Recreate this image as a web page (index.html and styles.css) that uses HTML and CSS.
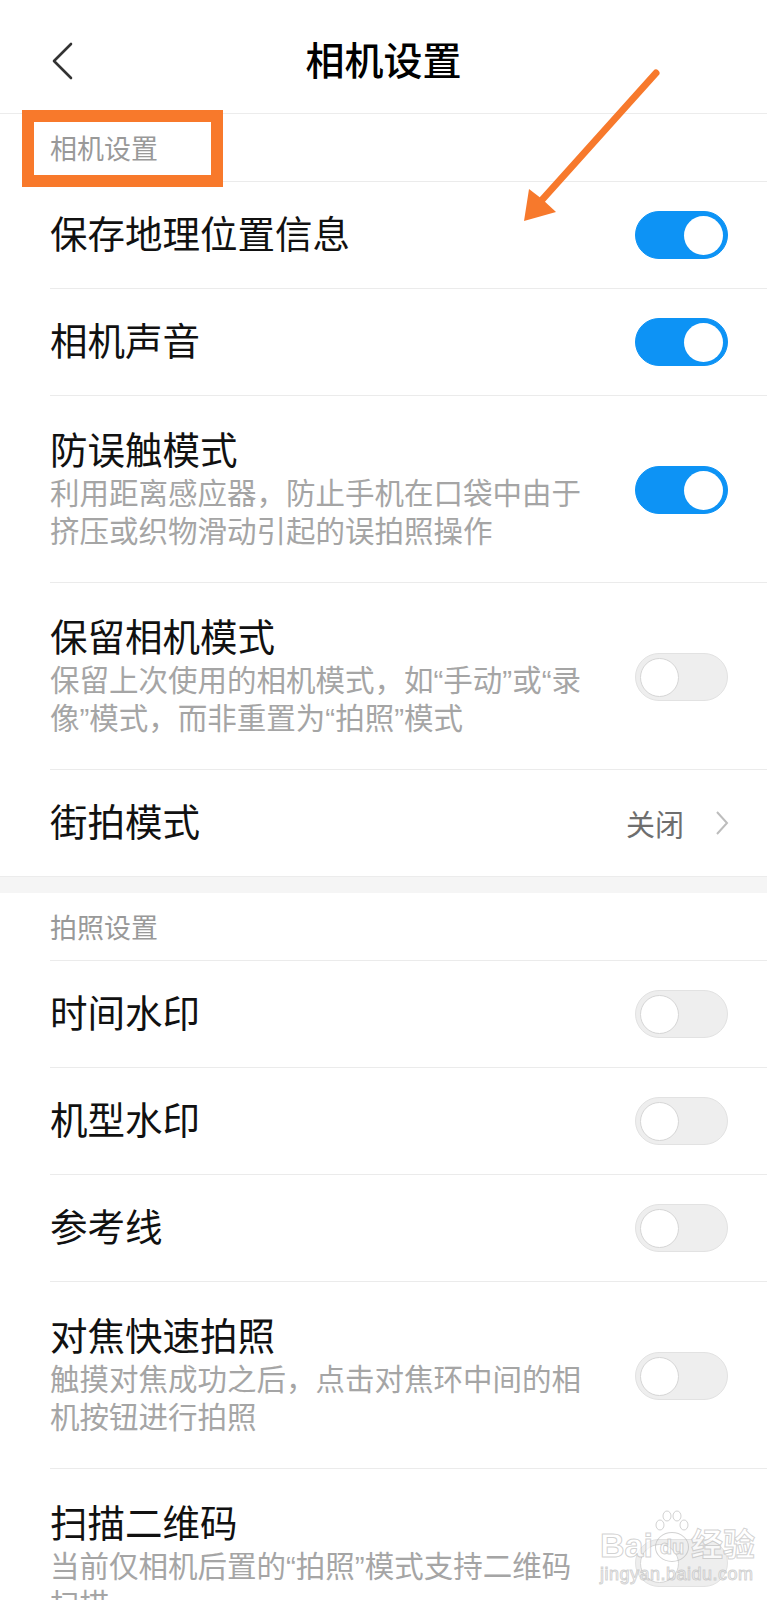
FILE: index.html
```html
<!DOCTYPE html>
<html lang="zh-CN">
<head>
    <meta charset="utf-8">
    <title>相机设置</title>
    <meta name="viewport" content="width=device-width, initial-scale=1">
    <link rel="stylesheet" href="styles.css">
</head>
<body>
    <div class="page">
        <header class="topbar">
            <a class="back">
                <svg width="22" height="38" viewBox="0 0 22 38"><path d="M20 2 L3 19 L20 36" fill="none" stroke="#333" stroke-width="2.6" stroke-linecap="round" stroke-linejoin="round"/></svg>
            </a>
            <h1>相机设置</h1>
            <span></span>
        </header>

        <section class="group">
            <div class="group-title">相机设置</div>
            <div class="item">
                <div class="text"><div class="label">保存地理位置信息</div></div>
                <span class="switch on"><span class="knob"></span></span>
            </div>
            <div class="item">
                <div class="text"><div class="label">相机声音</div></div>
                <span class="switch on"><span class="knob"></span></span>
            </div>
            <div class="item tall">
                <div class="text">
                    <div class="label">防误触模式</div>
                    <div class="desc">利用距离感应器，防止手机在口袋中由于挤压或织物滑动引起的误拍照操作</div>
                </div>
                <span class="switch on"><span class="knob"></span></span>
            </div>
            <div class="item tall">
                <div class="text">
                    <div class="label">保留相机模式</div>
                    <div class="desc">保留上次使用的相机模式，如“手动”或“录像”模式，而非重置为“拍照”模式</div>
                </div>
                <span class="switch"><span class="knob"></span></span>
            </div>
            <div class="item">
                <div class="text"><div class="label">街拍模式</div></div>
                <span class="more">
                    <span class="value">关闭</span>
                    <svg width="14" height="26" viewBox="0 0 14 26"><path d="M2 2 L12 13 L2 24" fill="none" stroke="#bdbdbd" stroke-width="2"/></svg>
                </span>
            </div>
        </section>

        <div class="gap"></div>

        <section class="group">
            <div class="group-title">拍照设置</div>
            <div class="item">
                <div class="text"><div class="label">时间水印</div></div>
                <span class="switch"><span class="knob"></span></span>
            </div>
            <div class="item">
                <div class="text"><div class="label">机型水印</div></div>
                <span class="switch"><span class="knob"></span></span>
            </div>
            <div class="item">
                <div class="text"><div class="label">参考线</div></div>
                <span class="switch"><span class="knob"></span></span>
            </div>
            <div class="item tall">
                <div class="text">
                    <div class="label">对焦快速拍照</div>
                    <div class="desc">触摸对焦成功之后，点击对焦环中间的相机按钮进行拍照</div>
                </div>
                <span class="switch"><span class="knob"></span></span>
            </div>
            <div class="item tall">
                <div class="text">
                    <div class="label">扫描二维码</div>
                    <div class="desc">当前仅相机后置的“拍照”模式支持二维码扫描</div>
                </div>
                <span class="switch"><span class="knob"></span></span>
            </div>
        </section>

        <!-- annotation overlays -->
        <div class="mark-box"></div>
        <svg class="arrow" width="767" height="260" viewBox="0 0 767 260">
            <line x1="656" y1="73" x2="541" y2="201" stroke="#f7792c" stroke-width="7" stroke-linecap="round"/>
            <polygon points="524,221 529,189 542,199 556,212" fill="#f7792c"/>
        </svg>

        <div class="watermark">
            <div class="wm-top">
                <span class="wm-bai">Bai</span>
                <span class="wm-paw">
                    <svg width="34" height="22" viewBox="0 0 34 22">
                        <ellipse cx="5" cy="15" rx="4" ry="5"/>
                        <ellipse cx="12" cy="6" rx="4" ry="5"/>
                        <ellipse cx="22" cy="6" rx="4" ry="5"/>
                        <ellipse cx="29" cy="15" rx="4" ry="5"/>
                    </svg>
                    <span class="wm-du">du</span>
                </span>
                <span class="wm-jy">经验</span>
            </div>
            <div class="wm-url">jingyan.baidu.com</div>
        </div>
    </div>
</body>
</html>
```

FILE: styles.css
```css
body {
    margin: 0;
    background-color: #fff;
    color: #111;
    font-family: "Liberation Sans", "Noto Sans CJK SC", sans-serif;
}
.page {
    position: relative;
    width: 767px;
    overflow: hidden;
}
.topbar {
    display: grid;
    grid-template-columns: 1fr auto 1fr;
    align-items: center;
    height: 114px;
    box-sizing: border-box;
    padding-top: 9px;
    border-bottom: 1px solid #ececec;
}
.back {
    display: flex;
    padding-left: 51px;
}
.topbar h1 {
    margin: 0;
    font-size: 39px;
    font-weight: 500;
    line-height: 1;
    color: #000;
}
.group-title {
    display: flex;
    align-items: center;
    height: 67px;
    padding-left: 50px;
    font-size: 27px;
    color: #999;
}
.item {
    display: flex;
    align-items: center;
    justify-content: space-between;
    min-height: 107px;
    box-sizing: border-box;
    margin-left: 50px;
    padding-right: 39px;
    border-top: 1px solid #ebebeb;
}
.item.tall {
    padding-top: 33px;
    padding-bottom: 31px;
}
.label {
    font-size: 37.5px;
    line-height: 44px;
    color: #111;
}
.desc {
    width: 548px;
    margin-top: 2px;
    font-size: 29.5px;
    line-height: 38px;
    color: #a5a5a5;
}
.switch {
    display: flex;
    align-items: center;
    flex-shrink: 0;
    width: 93px;
    height: 48px;
    box-sizing: border-box;
    padding: 0 4px;
    border: 1px solid #e2e2e2;
    border-radius: 24px;
    background-color: #eee;
}
.switch.on {
    justify-content: flex-end;
    border-color: #0d93f5;
    background-color: #0d93f5;
}
.knob {
    width: 39px;
    height: 39px;
    box-sizing: border-box;
    border: 1.5px solid #d6d6d6;
    border-radius: 50%;
    background-color: #fff;
}
.switch.on .knob {
    border: none;
}
.more {
    display: flex;
    align-items: center;
    gap: 31px;
    margin-right: -1px;
}
.value {
    font-size: 29px;
    color: #6e6e6e;
}
.gap {
    height: 16px;
    border-top: 1px solid #ececec;
    background-color: #f5f5f5;
}

/* orange annotation */
.mark-box {
    position: absolute;
    left: 22px;
    top: 110px;
    width: 201px;
    height: 77px;
    box-sizing: border-box;
    border: 12px solid #f8792b;
}
.arrow {
    position: absolute;
    left: 0;
    top: 0;
    pointer-events: none;
}

/* baidu watermark */
.watermark {
    position: absolute;
    left: 600px;
    top: 1514px;
    color: rgba(255, 255, 255, 0.7);
    -webkit-text-stroke: 1px rgba(180, 180, 180, 0.6);
}
.wm-top {
    display: flex;
    align-items: flex-end;
    height: 48px;
}
.wm-bai {
    font-size: 34px;
    font-weight: bold;
    line-height: 34px;
}
.wm-paw {
    display: flex;
    flex-direction: column;
    align-items: center;
    margin: 0 2px;
}
.wm-paw svg {
    fill: rgba(255, 255, 255, 0.7);
    stroke: rgba(180, 180, 180, 0.6);
}
.wm-du {
    display: flex;
    align-items: center;
    justify-content: center;
    width: 32px;
    height: 28px;
    border: 1.5px solid rgba(180, 180, 180, 0.6);
    border-radius: 50%;
    font-size: 20px;
    font-weight: bold;
}
.wm-jy {
    font-size: 32px;
    line-height: 34px;
    font-weight: bold;
}
.wm-url {
    margin-top: 2px;
    font-size: 18px;
    letter-spacing: 0.5px;
}
```
